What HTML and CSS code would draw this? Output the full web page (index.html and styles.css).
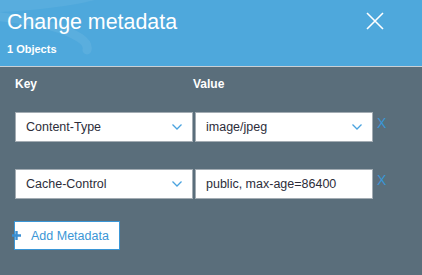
FILE: index.html
```html
<!DOCTYPE html>
<html>
<head>
<meta charset="utf-8">
<link rel="stylesheet" href="styles.css">
</head>
<body>
<div class="dialog">
  <header class="header">
    <svg class="deco" width="140" height="66" viewBox="0 0 140 66">
      <path d="M0 0 L95 0 C70 6 40 10 0 12 Z" fill="#ffffff" fill-opacity="0.06"/>
      <path d="M-6 16 C30 20 62 26 80 38 C86 42 88 46 87 50" fill="none" stroke="#ffffff" stroke-opacity="0.07" stroke-width="9" stroke-linecap="round"/>
    </svg>
    <div class="titles">
      <h1 class="title">Change metadata</h1>
      <div class="subtitle">1 Objects</div>
    </div>
    <button class="close" aria-label="Close">
      <svg width="18" height="18" viewBox="0 0 18 18"><path d="M1 1 L17 17 M17 1 L1 17" stroke="#fff" stroke-width="1.6"/></svg>
    </button>
  </header>
  <main class="body">
    <div class="labels">
      <span class="label key-col">Key</span>
      <span class="label">Value</span>
    </div>
    <div class="row">
      <div class="field key-col">Content-Type<span class="chev"><svg width="10" height="6" viewBox="0 0 10 6"><path d="M0.5 0.5 L5 5 L9.5 0.5" fill="none" stroke="#4aa3df" stroke-width="1.3"/></svg></span></div>
      <div class="field val-col">image/jpeg<span class="chev"><svg width="10" height="6" viewBox="0 0 10 6"><path d="M0.5 0.5 L5 5 L9.5 0.5" fill="none" stroke="#4aa3df" stroke-width="1.3"/></svg></span></div>
      <span class="remove">X</span>
    </div>
    <div class="row">
      <div class="field key-col">Cache-Control<span class="chev"><svg width="10" height="6" viewBox="0 0 10 6"><path d="M0.5 0.5 L5 5 L9.5 0.5" fill="none" stroke="#4aa3df" stroke-width="1.3"/></svg></span></div>
      <div class="field val-col">public, max-age=86400</div>
      <span class="remove">X</span>
    </div>
    <button class="add"><span class="plus"><svg width="9" height="9" viewBox="0 0 9 9"><path d="M4.5 0 V9 M0 4.5 H9" stroke="#3a8fd3" stroke-width="2.4"/></svg></span>Add Metadata</button>
  </main>
</div>
</body>
</html>
```
FILE: styles.css
```css
* { box-sizing: border-box; }
html, body { margin: 0; padding: 0; }
body {
  width: 422px;
  height: 275px;
  background: #5a6e7b;
  font-family: "Liberation Sans", Arial, sans-serif;
  overflow: hidden;
}
.dialog { display: flex; flex-direction: column; }
.header {
  position: relative;
  height: 67px;
  background: #4ea8dc;
  border-bottom: 1px solid #c9d0d6;
  display: flex;
  justify-content: space-between;
  padding: 0 0 0 7px;
  overflow: hidden;
}
.deco { position: absolute; left: 0; top: 0; }
.titles { position: relative; padding-top: 10px; }
.title {
  margin: 0;
  font-weight: normal;
  font-size: 21.4px;
  line-height: 24px;
  color: #fff;
}
.subtitle {
  margin-top: 9px;
  font-size: 11px;
  font-weight: bold;
  color: #fff;
  line-height: 13px;
}
.close {
  position: relative;
  background: none;
  border: 0;
  padding: 0;
  margin: 12px 38px 0 0;
  width: 18px;
  height: 18px;
  display: flex;
}
.body { padding: 10px 0 0 15px; display: flex; flex-direction: column; }
.labels { display: flex; height: 14px; margin-bottom: 21px; }
.label { font-size: 12px; font-weight: bold; color: #fff; line-height: 14px; }
.key-col { width: 178px; }
.row { display: flex; align-items: flex-start; margin-bottom: 27px; }
.field {
  position: relative;
  height: 30px;
  background: #fff;
  border: 1px solid #a3acb3;
  font-size: 12.5px;
  line-height: 28px;
  color: #2d2d3a;
  padding-left: 10px;
}
.val-col { width: 178px; margin-left: 2px; }
.chev { position: absolute; right: 10px; top: 11px; display: flex; }
.remove {
  margin-left: 4px;
  margin-top: 3px;
  font-size: 14px;
  line-height: 16px;
  color: #3a96d6;
}
.add {
  align-self: flex-start;
  margin-left: -1px;
  margin-top: -5px;
  width: 106px;
  height: 29px;
  background: #fff;
  border: 1px solid #3a96d6;
  color: #3a96d6;
  font-family: "Liberation Sans", Arial, sans-serif;
  font-size: 12.5px;
  padding: 0;
  display: flex;
  align-items: center;
}
.plus { display: flex; margin-left: -3px; margin-right: 10px; }
```
